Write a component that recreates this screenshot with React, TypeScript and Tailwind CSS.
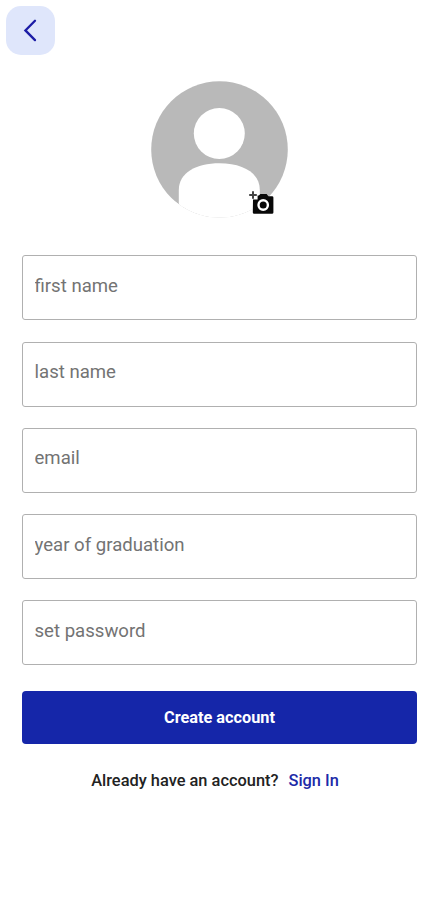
import { useState } from 'react'

interface Field {
  name: string
  type: string
}

const FIELDS: Field[] = [
  { name: 'first name', type: 'text' },
  { name: 'last name', type: 'text' },
  { name: 'email', type: 'email' },
  { name: 'year of graduation', type: 'text' },
  { name: 'set password', type: 'password' },
]

function Avatar() {
  return (
    <svg className="w-[137px] h-[137px]" viewBox="0 0 137 137">
      <defs>
        <clipPath id="avatar-clip">
          <circle cx="68.5" cy="68.5" r="68.3" />
        </clipPath>
      </defs>
      <g clipPath="url(#avatar-clip)">
        <rect width="137" height="137" fill="#b9b9b9" />
        <circle cx="68.3" cy="52.5" r="25.5" fill="#fff" />
        <path d="M27.8 138V109C27.8 92 45 82.3 68.5 82.3S108.8 92 108.8 109V138Z" fill="#fff" />
      </g>
      <circle cx="68.5" cy="69" r="68.5" fill="none" stroke="#fff" strokeWidth="1" strokeDasharray="100 331" strokeDashoffset="-58" />
    </svg>
  )
}

function AddPhotoIcon() {
  return (
    <svg className="w-[26px] h-[26px]" viewBox="0 0 26 26">
      <path d="M5 1.2v7.6M1.2 5h7.6" stroke="#444" strokeWidth="2" fill="none" />
      <path d="M5 9.6H9.6V5.6H10.9L12.4 4H18.6L20.4 6.2H24Q25.4 6.2 25.4 7.6V22.4Q25.4 23.8 24 23.8H6.2Q4.8 23.8 4.8 22.4Z" fill="#080808" />
      <circle cx="15.2" cy="15" r="4.7" fill="#080808" stroke="#fff" strokeWidth="2.4" />
    </svg>
  )
}

export default function SignUp() {
  const [values, setValues] = useState<Record<string, string>>({})

  return (
    <div className="h-[900px] bg-white overflow-hidden font-['Roboto',sans-serif]">
      {/* Header */}
      <div className="pl-1.5 pt-1.5">
        <button className="w-[49px] h-[49px] rounded-[15px] bg-[#dfe6fb] flex items-center justify-center" aria-label="Back">
          <svg className="w-[49px] h-[49px]" viewBox="0 0 49 49" fill="none" stroke="#1c1ca6" strokeWidth="2.3" strokeLinecap="round">
            <path d="M29 14.7L19.4 24.4L29 34.1" />
          </svg>
        </button>
      </div>

      {/* Avatar */}
      <div className="relative w-[137px] h-[137px] mt-[26px] ml-[151px]">
        <Avatar />
        <button className="absolute left-[97px] top-[109px]" aria-label="Add photo">
          <AddPhotoIcon />
        </button>
      </div>

      {/* Form */}
      <form className="ml-[22px] mr-[21px] mt-[37.25px]" onSubmit={e => e.preventDefault()}>
        <div className="flex flex-col gap-[21.25px]">
          {FIELDS.map(f => (
            <input
              key={f.name}
              type={f.type}
              placeholder={f.name}
              value={values[f.name] || ''}
              onChange={e => setValues({ ...values, [f.name]: e.target.value })}
              className="w-full h-[65px] px-[11.5px] pb-1 border border-[#b0b0b0] rounded-[3px] text-[18.6px] text-gray-900 placeholder:text-[#737373] outline-none"
            />
          ))}
        </div>
        <button className="w-full h-[53px] mt-[26px] rounded-[4px] bg-[#1526a9] text-white text-[16.3px] font-bold">
          Create account
        </button>
      </form>

      <div className="flex justify-center gap-2.5 mt-[24.5px] pr-2 text-[16.4px] leading-6 font-medium">
        <span className="text-[#222222]">Already have an account?</span>
        <a href="#" className="text-[#1c2aa8]">Sign In</a>
      </div>
    </div>
  )
}
